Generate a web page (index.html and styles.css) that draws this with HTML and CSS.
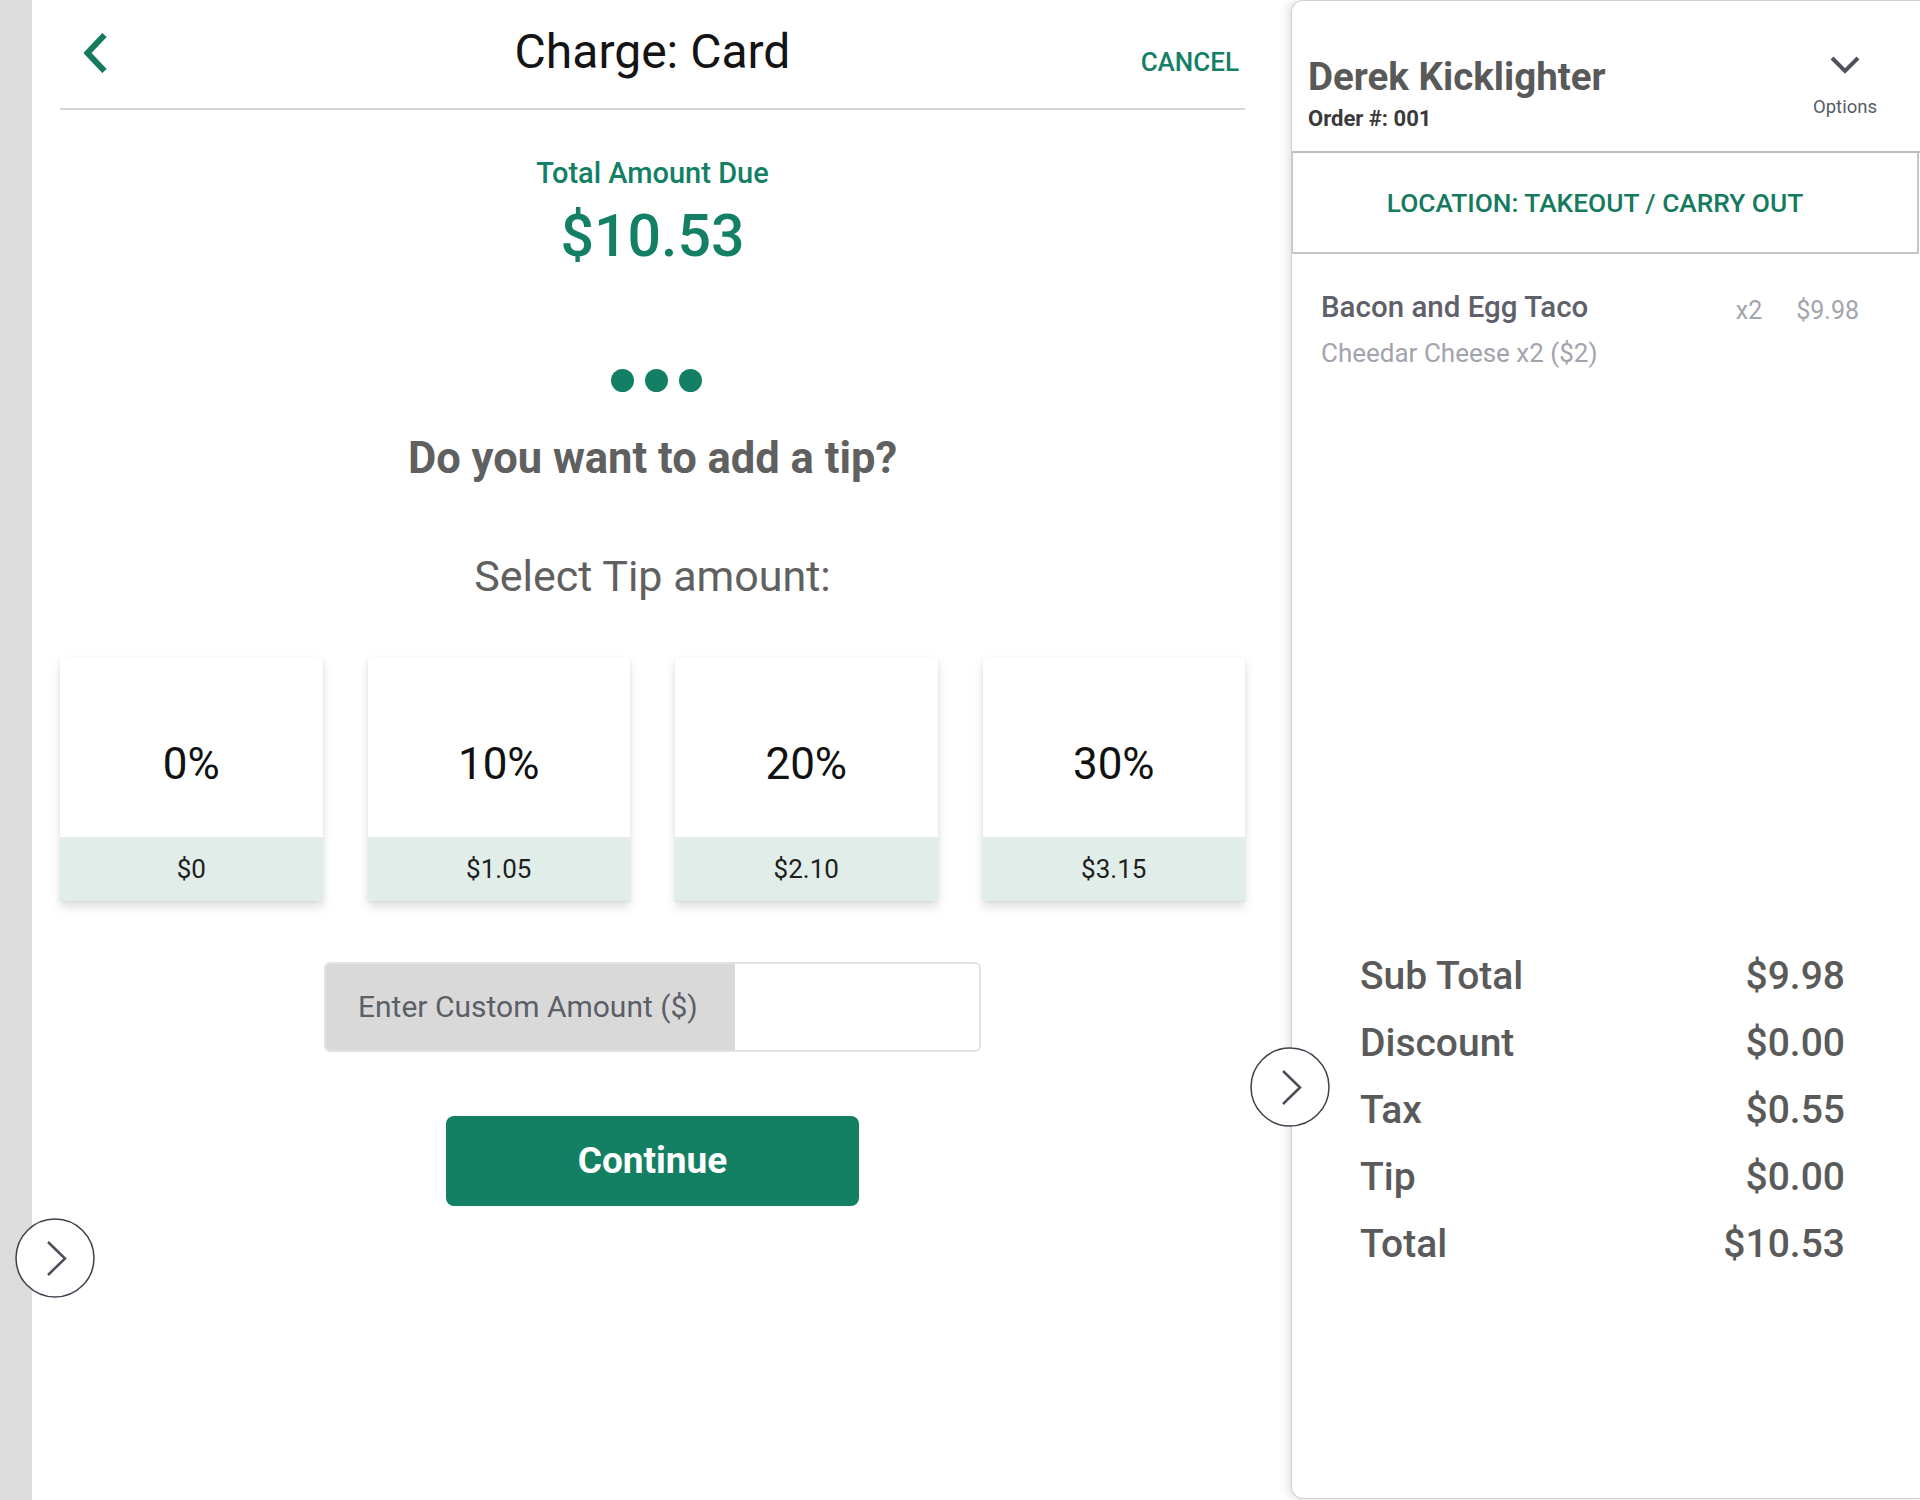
FILE: index.html
```html
<!DOCTYPE html>
<html lang="en">
<head>
<meta charset="utf-8">
<title>Charge: Card</title>
<link rel="stylesheet" href="styles.css">
</head>
<body>
<div class="app">
  <div class="rail"></div>

  <main class="charge">
    <header class="charge-header">
      <button class="back" aria-label="Back">
        <svg width="24" height="40" viewBox="0 0 24 40"><path d="M20.5 2 L3.5 20 L20.5 38" fill="none" stroke="#167a5e" stroke-width="6"/></svg>
      </button>
      <h1 class="title">Charge: Card</h1>
      <button class="cancel">CANCEL</button>
    </header>

    <div class="due-label">Total Amount Due</div>
    <div class="due-amount">$10.53</div>

    <div class="dots"><span></span><span></span><span></span></div>

    <h2 class="tip-question">Do you want to add a tip?</h2>
    <p class="tip-select">Select Tip amount:</p>

    <div class="tip-grid">
      <button class="tip-card"><span class="tip-pct">0%</span><span class="tip-amt">$0</span></button>
      <button class="tip-card"><span class="tip-pct">10%</span><span class="tip-amt">$1.05</span></button>
      <button class="tip-card"><span class="tip-pct">20%</span><span class="tip-amt">$2.10</span></button>
      <button class="tip-card"><span class="tip-pct">30%</span><span class="tip-amt">$3.15</span></button>
    </div>

    <div class="custom">
      <label class="custom-label" for="custom">Enter Custom Amount ($)</label>
      <input class="custom-input" id="custom" type="text">
    </div>

    <button class="continue">Continue</button>
  </main>

  <aside class="order">
    <div class="order-header">
      <div class="order-who">
        <div class="order-name">Derek Kicklighter</div>
        <div class="order-num">Order #: 001</div>
      </div>
      <div class="order-options">
        <svg width="30" height="19" viewBox="0 0 30 19"><path d="M2 2 L15 15 L28 2" fill="none" stroke="#4d525c" stroke-width="4"/></svg>
        <span>Options</span>
      </div>
    </div>

    <div class="location">LOCATION: TAKEOUT / CARRY OUT</div>

    <div class="items">
      <div class="item-row">
        <span class="item-name">Bacon and Egg Taco</span>
        <span class="item-qty">x2</span>
        <span class="item-price">$9.98</span>
      </div>
      <div class="item-mod">Cheedar Cheese x2 ($2)</div>
    </div>

    <div class="totals">
      <div class="total-row"><span>Sub Total</span><span>$9.98</span></div>
      <div class="total-row"><span>Discount</span><span>$0.00</span></div>
      <div class="total-row"><span>Tax</span><span>$0.55</span></div>
      <div class="total-row"><span>Tip</span><span>$0.00</span></div>
      <div class="total-row"><span>Total</span><span>$10.53</span></div>
    </div>
  </aside>

  <button class="circle-btn circle-left" aria-label="Next">
    <svg width="80" height="80" viewBox="0 0 80 80"><circle cx="40" cy="40" r="39" fill="#fff" stroke="#3d414a" stroke-width="1.5"/><path d="M33 24 L50 40.5 L33 57" fill="none" stroke="#4a4d55" stroke-width="2.5"/></svg>
  </button>
  <button class="circle-btn circle-right" aria-label="Expand">
    <svg width="80" height="80" viewBox="0 0 80 80"><circle cx="40" cy="40" r="39" fill="#fff" stroke="#3d414a" stroke-width="1.5"/><path d="M33 24 L50 40.5 L33 57" fill="none" stroke="#4a4d55" stroke-width="2.5"/></svg>
  </button>
</div>
</body>
</html>
```

FILE: styles.css
```css
* { box-sizing: border-box; }

body {
  margin: 0;
  background: #fff;
  font-family: Roboto, "Noto Sans", "Liberation Sans", sans-serif;
}

button, input { font-family: inherit; }

.app {
  position: relative;
  display: flex;
  width: 1920px;
  height: 1500px;
  overflow: hidden;
}

.rail {
  flex: none;
  width: 32px;
  background: #dcdcdc;
}

/* ---------- left: charge ---------- */
.charge {
  flex: 1;
  display: flex;
  flex-direction: column;
  align-items: center;
  padding: 0 46px 0 28px;
}

.charge-header {
  align-self: stretch;
  height: 110px;
  border-bottom: 2px solid #d6d6d6;
  display: grid;
  grid-template-columns: 1fr auto 1fr;
  align-items: start;
}

.back {
  justify-self: start;
  width: 24px;
  height: 40px;
  margin: 33px 0 0 24px;
  padding: 0;
  border: 0;
  background: none;
}
.back svg { display: block; }

.title {
  margin: 28px 0 0;
  font-size: 48px;
  font-weight: 400;
  line-height: 1;
  color: #141414;
}

.cancel {
  justify-self: end;
  margin: 49px 6px 0 0;
  padding: 0;
  border: 0;
  background: none;
  font-size: 26px;
  font-weight: 500;
  line-height: 1;
  color: #138065;
}

.due-label {
  margin-top: 49px;
  font-size: 29px;
  font-weight: 500;
  line-height: 1;
  color: #138065;
}

.due-amount {
  margin-top: 18px;
  font-size: 59px;
  font-weight: 500;
  line-height: 1;
  color: #138065;
}

.dots {
  display: flex;
  gap: 11px;
  margin: 104px 0 0 8px;
}
.dots span {
  width: 23px;
  height: 23px;
  border-radius: 50%;
  background: #138065;
}

.tip-question {
  margin: 45px 0 0;
  font-size: 43.5px;
  font-weight: 700;
  line-height: 1;
  color: #606060;
}

.tip-select {
  margin: 74px 0 0;
  font-size: 43px;
  font-weight: 400;
  line-height: 1;
  color: #606060;
}

.tip-grid {
  align-self: stretch;
  margin-top: 59px;
  display: grid;
  grid-template-columns: repeat(4, 1fr);
  gap: 45px;
}

.tip-card {
  display: flex;
  flex-direction: column;
  padding: 0;
  border: 0;
  background: #fff;
  box-shadow: 0 6px 10px rgba(0, 0, 0, 0.13), 0 1px 3px rgba(0, 0, 0, 0.06);
}

.tip-pct {
  height: 180px;
  padding-top: 85px;
  font-size: 44px;
  line-height: 1;
  color: #111;
  text-align: center;
}

.tip-amt {
  height: 64px;
  display: flex;
  align-items: center;
  justify-content: center;
  padding-top: 1px;
  background: #e0ede9;
  font-size: 26px;
  color: #1e1e1e;
}

.custom {
  margin-top: 61px;
  width: 657px;
  height: 90px;
  display: flex;
  border: 2px solid #e2e2e2;
  border-radius: 6px;
  overflow: hidden;
}

.custom-label {
  width: 409px;
  display: flex;
  align-items: center;
  padding-left: 32px;
  background: #d9d9d9;
  font-size: 30px;
  color: #5b5f67;
}

.custom-input {
  flex: 1;
  min-width: 0;
  border: 0;
  background: #fff;
}

.continue {
  margin-top: 64px;
  width: 413px;
  height: 90px;
  border: 0;
  border-radius: 8px;
  background: #138064;
  color: #fff;
  font-size: 37px;
  font-weight: 700;
}

/* ---------- right: order ---------- */
.order {
  flex: none;
  width: 629px;
  height: 1499px;
  display: flex;
  flex-direction: column;
  border: 1px solid #cfcfcf;
  border-right: 0;
  border-radius: 12px 0 0 12px;
  background: #fff;
  box-shadow: -3px 0 10px rgba(0, 0, 0, 0.12);
}

.order-header {
  height: 152px;
  display: flex;
  justify-content: space-between;
  padding-left: 16px;
  border-bottom: 2px solid #bdbdbd;
}

.order-who { padding-top: 57px; }

.order-name {
  font-size: 38.5px;
  font-weight: 700;
  line-height: 1;
  color: #595959;
}

.order-num {
  margin-top: 11px;
  font-size: 22px;
  font-weight: 700;
  line-height: 1;
  color: #3a3a3a;
}

.order-options {
  width: 70px;
  margin-right: 40px;
  padding-top: 55px;
  display: flex;
  flex-direction: column;
  align-items: center;
}
.order-options svg { display: block; }
.order-options span {
  margin-top: 23px;
  font-size: 18.5px;
  line-height: 1;
  color: #555b65;
}

.location {
  height: 101px;
  margin-right: 1px;
  display: flex;
  align-items: center;
  justify-content: center;
  padding-right: 20px;
  border-left: 1px solid #c6c6c6;
  border-right: 2px solid #c6c6c6;
  border-bottom: 2px solid #c6c6c6;
  font-size: 26.3px;
  font-weight: 500;
  color: #157a5e;
}

.items {
  flex: 1;
  padding: 39px 61px 0 29px;
}

.item-row {
  display: flex;
  align-items: flex-start;
}

.item-name {
  flex: 1;
  font-size: 29.5px;
  font-weight: 500;
  line-height: 1;
  color: #5e6169;
}

.item-qty,
.item-price {
  margin-top: 5px;
  font-size: 25px;
  line-height: 1;
  color: #a3a5ad;
}
.item-price { margin-left: 34px; }

.item-mod {
  margin-top: 17px;
  font-size: 26px;
  line-height: 1;
  color: #a2a4ad;
}

.totals {
  padding: 0 75px 220px 68px;
}

.total-row {
  height: 67.2px;
  display: flex;
  justify-content: space-between;
  align-items: center;
  font-size: 39px;
  font-weight: 500;
  color: #5a5a5a;
}

/* ---------- overlay round buttons ---------- */
.circle-btn {
  position: absolute;
  width: 80px;
  height: 80px;
  padding: 0;
  border: 0;
  background: none;
}
.circle-btn svg { display: block; }
.circle-left { left: 15px; top: 1218px; }
.circle-right { left: 1250px; top: 1047px; }
```
